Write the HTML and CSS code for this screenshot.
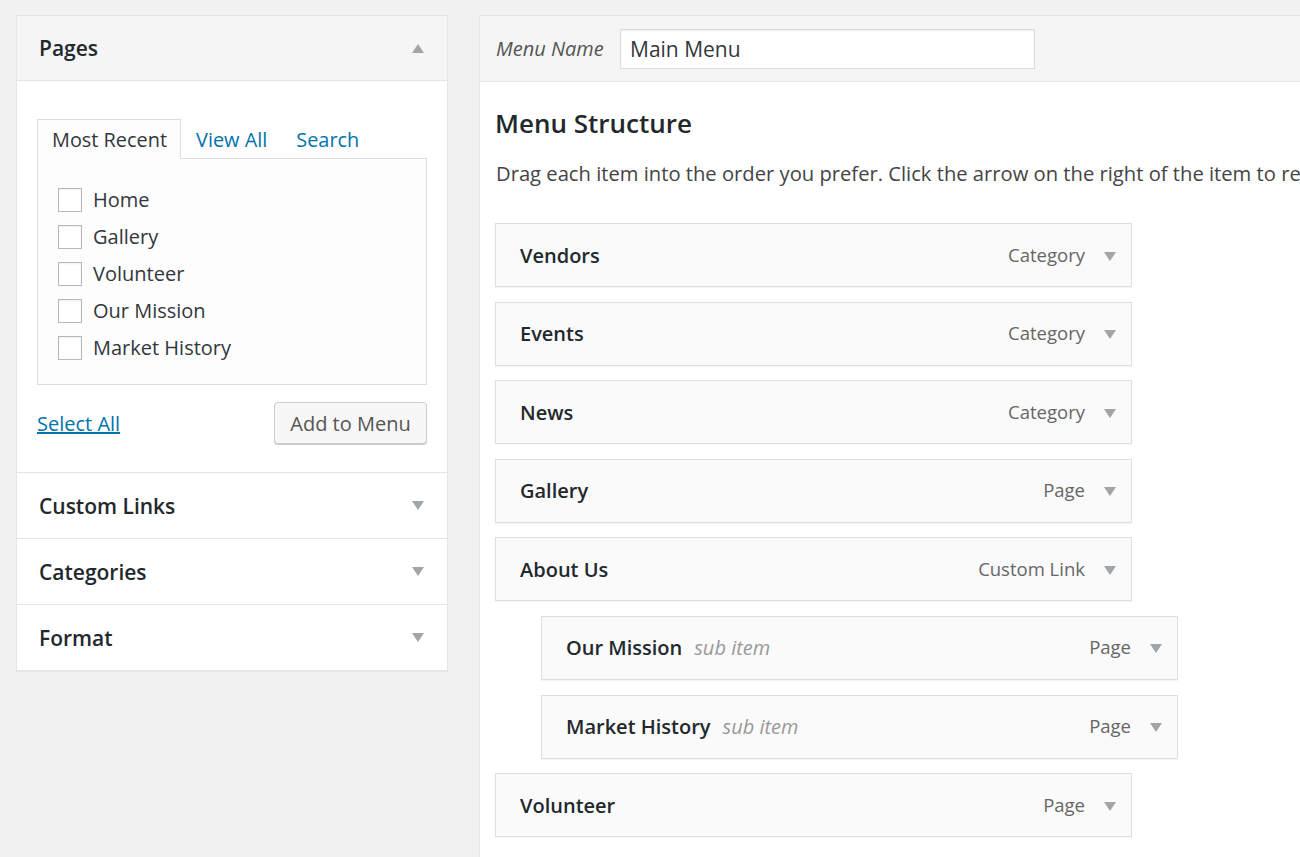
FILE: index.html
```html
<!DOCTYPE html>
<html>
<head>
<meta charset="utf-8">
<link rel="stylesheet" href="styles.css">
</head>
<body>
<div class="page">
  <aside class="side">
    <section class="box open">
      <div class="box-head head-gray">
        <h3>Pages</h3>
        <span class="tri up"></span>
      </div>
      <div class="box-body">
        <ul class="tabs">
          <li class="tab active">Most Recent</li>
          <li class="tab">View All</li>
          <li class="tab">Search</li>
        </ul>
        <div class="tab-panel">
          <label class="check"><span class="cb"></span>Home</label>
          <label class="check"><span class="cb"></span>Gallery</label>
          <label class="check"><span class="cb"></span>Volunteer</label>
          <label class="check"><span class="cb"></span>Our Mission</label>
          <label class="check"><span class="cb"></span>Market History</label>
        </div>
        <div class="actions">
          <a class="select-all" href="#">Select All</a>
          <button class="btn">Add to Menu</button>
        </div>
      </div>
    </section>
    <section class="box">
      <div class="box-head"><h3>Custom Links</h3><span class="tri down"></span></div>
    </section>
    <section class="box">
      <div class="box-head"><h3>Categories</h3><span class="tri down"></span></div>
    </section>
    <section class="box">
      <div class="box-head"><h3>Format</h3><span class="tri down"></span></div>
    </section>
  </aside>

  <main class="main">
    <div class="main-head">
      <span class="name-label">Menu Name</span>
      <div class="name-input">Main Menu</div>
    </div>
    <div class="main-body">
      <h2>Menu Structure</h2>
      <p class="desc">Drag each item into the order you prefer. Click the arrow on the right of the item to reveal additional configuration options.</p>
      <ul class="items">
        <li class="item"><span class="title">Vendors</span><span class="type">Category</span><span class="tri down"></span></li>
        <li class="item"><span class="title">Events</span><span class="type">Category</span><span class="tri down"></span></li>
        <li class="item"><span class="title">News</span><span class="type">Category</span><span class="tri down"></span></li>
        <li class="item"><span class="title">Gallery</span><span class="type">Page</span><span class="tri down"></span></li>
        <li class="item"><span class="title">About Us</span><span class="type">Custom Link</span><span class="tri down"></span></li>
        <li class="item sub"><span class="title">Our Mission</span><span class="subtag">sub item</span><span class="type">Page</span><span class="tri down"></span></li>
        <li class="item sub"><span class="title">Market History</span><span class="subtag">sub item</span><span class="type">Page</span><span class="tri down"></span></li>
        <li class="item"><span class="title">Volunteer</span><span class="type">Page</span><span class="tri down"></span></li>
      </ul>
    </div>
  </main>
</div>
</body>
</html>
```

FILE: styles.css
```css
* { box-sizing: border-box; }
html, body { margin: 0; padding: 0; }
body {
  background: #f1f1f1;
  font-family: "Open Sans", "Liberation Sans", sans-serif;
  font-size: 20px;
  color: #444;
  overflow: hidden;
  height: 857px;
}
.page {
  display: flex;
  align-items: flex-start;
  padding: 15px 0 0 16px;
  gap: 31px;
  width: 1600px;
}

/* ---------- Left column ---------- */
.side {
  width: 432px;
  flex: none;
  background: #fff;
  border: 1px solid #e5e5e5;
  box-shadow: 0 1px 1px rgba(0,0,0,.04);
}
.box + .box { border-top: 1px solid #e5e5e5; }
.box-head {
  height: 65px;
  display: flex;
  align-items: center;
  justify-content: space-between;
  padding: 0 23px 0 22px;
}
.box-head h3 {
  margin: 0;
  font-size: 21px;
  font-weight: 600;
  color: #23282d;
}
.head-gray {
  background: #f5f5f5;
  border-bottom: 1px solid #e5e5e5;
}
.tri {
  width: 0;
  height: 0;
  border-left: 6px solid transparent;
  border-right: 6px solid transparent;
  flex: none;
}
.tri.up { border-bottom: 9px solid #a0a5aa; }
.tri.down { border-top: 9px solid #a0a5aa; }

.box-body {
  padding: 38px 20px 28px 20px;
}
.tabs {
  list-style: none;
  margin: 0;
  padding: 0;
  display: flex;
  position: relative;
  z-index: 1;
}
.tab {
  padding: 0 13px 0 14px;
  height: 40px;
  line-height: 40px;
  font-size: 19.9px;
  color: #0073aa;
  border: 1px solid transparent;
  border-bottom: none;
}
.tab.active {
  color: #32373c;
  background: #fdfdfd;
  border-color: #ddd;
}
.tab-panel {
  margin-top: -1px;
  border: 1px solid #ddd;
  background: #fdfdfd;
  padding: 22px 19px 18px 20px;
  display: flex;
  flex-direction: column;
}
.check {
  display: flex;
  align-items: center;
  height: 37px;
  color: #32373c;
}
.cb {
  width: 24px;
  height: 24px;
  border: 1px solid #b4b9be;
  background: #fff;
  box-shadow: inset 0 1px 2px rgba(0,0,0,.07);
  margin-right: 11px;
  flex: none;
}
.actions {
  display: flex;
  justify-content: space-between;
  align-items: center;
  margin-top: 17px;
}
.select-all {
  color: #0073aa;
  text-decoration: underline;
}
.btn {
  font-family: inherit;
  font-size: 20px;
  color: #555;
  background: #f7f7f7;
  border: 1px solid #ccc;
  border-radius: 4px;
  box-shadow: 0 1px 0 #ccc;
  width: 153px;
  height: 42px;
  padding: 0;
}

/* ---------- Main ---------- */
.main {
  flex: none;
  width: 1000px;
  min-height: 900px;
  background: #fff;
  border: 1px solid #e5e5e5;
}
.main-head {
  height: 66px;
  background: #f5f5f5;
  border-bottom: 1px solid #e5e5e5;
  display: flex;
  align-items: center;
  padding-left: 16px;
}
.name-label {
  font-style: italic;
  color: #555;
  font-size: 20px;
  width: 124px;
}
.name-input {
  width: 415px;
  height: 40px;
  border: 1px solid #ddd;
  background: #fff;
  box-shadow: inset 0 1px 2px rgba(0,0,0,.07);
  padding: 0 9px;
  line-height: 38px;
  font-size: 21px;
  color: #32373c;
}
.main-body {
  padding: 23px 16px 0 15px;
}
.main-body h2 {
  margin: 0;
  font-size: 26px;
  font-weight: 600;
  color: #23282d;
  line-height: 36px;
}
.desc {
  margin: 19px 0 0 1px;
  line-height: 26px;
  color: #444;
  white-space: nowrap;
  font-size: 20.2px;
}
.items {
  list-style: none;
  margin: 37px 0 0 0;
  padding: 0;
}
.item {
  width: 637px;
  height: 64px;
  display: flex;
  align-items: center;
  border: 1px solid #dfdfdf;
  background: #fafafa;
  box-shadow: 0 1px 1px rgba(0,0,0,.04);
  padding: 0 16px 0 24px;
  margin-bottom: 14.6px;
}
.item.sub { margin-left: 46px; }
.item .title {
  font-weight: 600;
  color: #23282d;
}
.subtag {
  font-style: italic;
  color: #999;
  margin-left: 12px;
}
.item .type {
  margin-left: auto;
  color: #666;
  font-size: 18.5px;
  margin-right: 18px;
  position: relative;
  top: -1px;
}
.item .tri {
  position: relative;
  top: 1px;
  left: 1px;
}
```
